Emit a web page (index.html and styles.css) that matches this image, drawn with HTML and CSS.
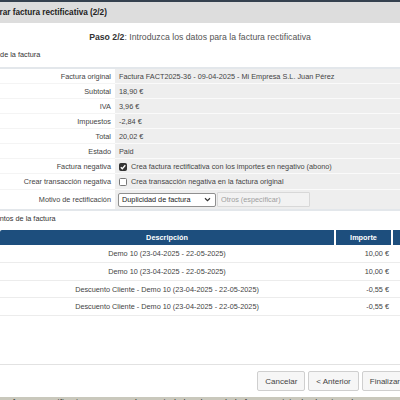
FILE: index.html
```html
<!DOCTYPE html>
<html lang="es">
<head>
<meta charset="utf-8">
<title>Generar factura rectificativa</title>
<link rel="stylesheet" href="styles.css">
</head>
<body>
<div class="topline"></div>
<div class="modal">
  <div class="titlebar">Generar factura rectificativa (2/2)</div>
  <div class="step"><b>Paso 2/2</b>: Introduzca los datos para la factura rectificativa</div>
  <div class="section">Datos de la factura</div>
  <div class="form">
    <div class="lbl">Factura original</div><div class="val">Factura FACT2025-36 - 09-04-2025 - Mi Empresa S.L. Juan Pérez</div>
    <div class="lbl">Subtotal</div><div class="val">18,90 €</div>
    <div class="lbl">IVA</div><div class="val">3,96 €</div>
    <div class="lbl">Impuestos</div><div class="val">-2,84 €</div>
    <div class="lbl">Total</div><div class="val">20,02 €</div>
    <div class="lbl">Estado</div><div class="val">Paid</div>
    <div class="lbl">Factura negativa</div>
    <div class="val check"><span class="box on"><svg viewBox="0 0 8 8" width="8" height="8"><path d="M1.8 4.2 L3.3 5.7 L6.3 2.3" fill="none" stroke="#fff" stroke-width="1.3"/></svg></span>Crea factura rectificativa con los importes en negativo (abono)</div>
    <div class="lbl tall">Crear transacción negativa</div>
    <div class="val check tall"><span class="box"></span>Crea transacción negativa en la factura original</div>
    <div class="lbl sel">Motivo de rectificación</div>
    <div class="val sel">
      <div class="select"><span>Duplicidad de factura</span><svg viewBox="0 0 8 6" width="7" height="5"><path d="M1 1.5 L4 4.5 L7 1.5" fill="none" stroke="#333" stroke-width="1.4"/></svg></div>
      <input class="other" type="text" placeholder="Otros (especificar)">
    </div>
  </div>
  <div class="section s2">Elementos de la factura</div>
  <div class="items">
    <div class="irow head"><div>Descripción</div><div>Importe</div><div></div></div>
    <div class="irow"><div>Demo 10 (23-04-2025 - 22-05-2025)</div><div class="num">10,00 €</div><div></div></div>
    <div class="irow"><div>Demo 10 (23-04-2025 - 22-05-2025)</div><div class="num">10,00 €</div><div></div></div>
    <div class="irow"><div>Descuento Cliente - Demo 10 (23-04-2025 - 22-05-2025)</div><div class="num">-0,55 €</div><div></div></div>
    <div class="irow"><div>Descuento Cliente - Demo 10 (23-04-2025 - 22-05-2025)</div><div class="num">-0,55 €</div><div></div></div>
  </div>
  <div class="footer">
    <button class="btn">Cancelar</button>
    <button class="btn">&lt; Anterior</button>
    <button class="btn">Finalizar</button>
  </div>
</div>
<div class="under">La factura rectificativa se generará a partir de los datos de la factura original seleccionada</div>
</body>
</html>
```
FILE: styles.css
```css
html, body {
  margin: 0;
  padding: 0;
  background: #fff;
}
body {
  width: 400px;
  height: 400px;
  overflow: hidden;
  font-family: "Liberation Sans", Arial, sans-serif;
  color: #444;
}
.topline {
  height: 2px;
  background: #35414f;
}
.modal {
  margin-left: -21px;
  width: 442px;
}
.titlebar {
  height: 21px;
  line-height: 21px;
  background: #dddddd;
  font-weight: bold;
  font-size: 8.2px;
  color: #222;
}
.step {
  margin-top: 8px;
  height: 12px;
  line-height: 12px;
  text-align: center;
  font-size: 8.7px;
  color: #555;
}
.step b {
  color: #333;
}
.section {
  margin-top: 6px;
  height: 12px;
  line-height: 12px;
  font-size: 7.3px;
  color: #333;
}
.section.s2 {
  margin-top: 2px;
}
.form {
  margin-top: 6px;
  border-top: 2px solid #e3e7eb;
  border-bottom: 2px solid #e3e7eb;
  display: grid;
  grid-template-columns: 136px 1fr;
  font-size: 7.3px;
}
.lbl, .val {
  height: 15px;
  line-height: 15px;
  box-sizing: border-box;
  white-space: nowrap;
}
.lbl {
  text-align: right;
  padding-right: 4px;
  color: #444;
  border-bottom: 1px solid #f4f4f4;
}
.val {
  background: #eeeeee;
  padding-left: 4px;
  border-bottom: 1px solid #fafafa;
  color: #444;
}
.lbl.tall, .val.tall {
  height: 16px;
  line-height: 16px;
}
.lbl.sel, .val.sel {
  height: 19px;
  line-height: 19px;
  border-bottom: none;
}
.check {
  display: flex;
  align-items: center;
  gap: 4px;
}
.box {
  width: 8px;
  height: 8px;
  box-sizing: border-box;
  border: 1px solid #777;
  border-radius: 1.5px;
  background: #fff;
  display: flex;
  flex: none;
  margin-top: 1px;
}
.box.on {
  background: #333;
  border-color: #333;
}
.box.on svg {
  margin: -1px;
}
.val.sel {
  display: flex;
  align-items: center;
  gap: 1px;
  padding-left: 3px;
}
.select {
  width: 98px;
  height: 14px;
  box-sizing: border-box;
  border: 1px solid #8f8f8f;
  border-radius: 2px;
  background: #fff;
  display: flex;
  align-items: center;
  justify-content: space-between;
  padding: 0 4px 0 3px;
  line-height: 12px;
  color: #222;
}
.other {
  width: 93px;
  height: 15px;
  box-sizing: border-box;
  border: 1px solid #d8d8d8;
  border-radius: 1px;
  background: #f2f2f2;
  font-family: inherit;
  font-size: 7.3px;
  padding: 0 3px;
  margin: 0;
}
.other::placeholder {
  color: #a0a0a0;
}
.items {
  margin-left: 21px;
  margin-top: 5px;
  width: 421px;
  font-size: 7.3px;
}
.irow {
  display: grid;
  grid-template-columns: 334px 55px 1fr;
  column-gap: 2px;
  height: 17.75px;
  line-height: 17px;
  box-sizing: border-box;
  border-bottom: 1px solid #ececec;
  text-align: center;
  color: #444;
}
.irow .num {
  text-align: right;
  padding-right: 2px;
}
.irow.head {
  height: 15px;
  line-height: 15px;
  border-bottom: none;
  font-weight: bold;
  color: #fff;
}
.irow.head > div {
  background: #1d4e7d;
}
.irow.head > div:first-child {
  border-top-left-radius: 2px;
}
.footer {
  margin-top: 48px;
  border-top: 1px solid #e2e2e2;
  padding-top: 6px;
  padding-right: 13px;
  display: flex;
  justify-content: flex-end;
  gap: 3px;
}
.btn {
  height: 20px;
  margin: 0;
  padding: 0 7px;
  font-family: inherit;
  font-size: 8px;
  color: #444;
  background: #f6f6f6;
  border: 1px solid #cfcfcf;
  border-radius: 2px;
}
.under {
  margin-top: 6px;
  height: 3px;
  overflow: hidden;
  background: #c9c8bc;
  color: #333;
  font-size: 9px;
  line-height: 12px;
  white-space: nowrap;
}
```
